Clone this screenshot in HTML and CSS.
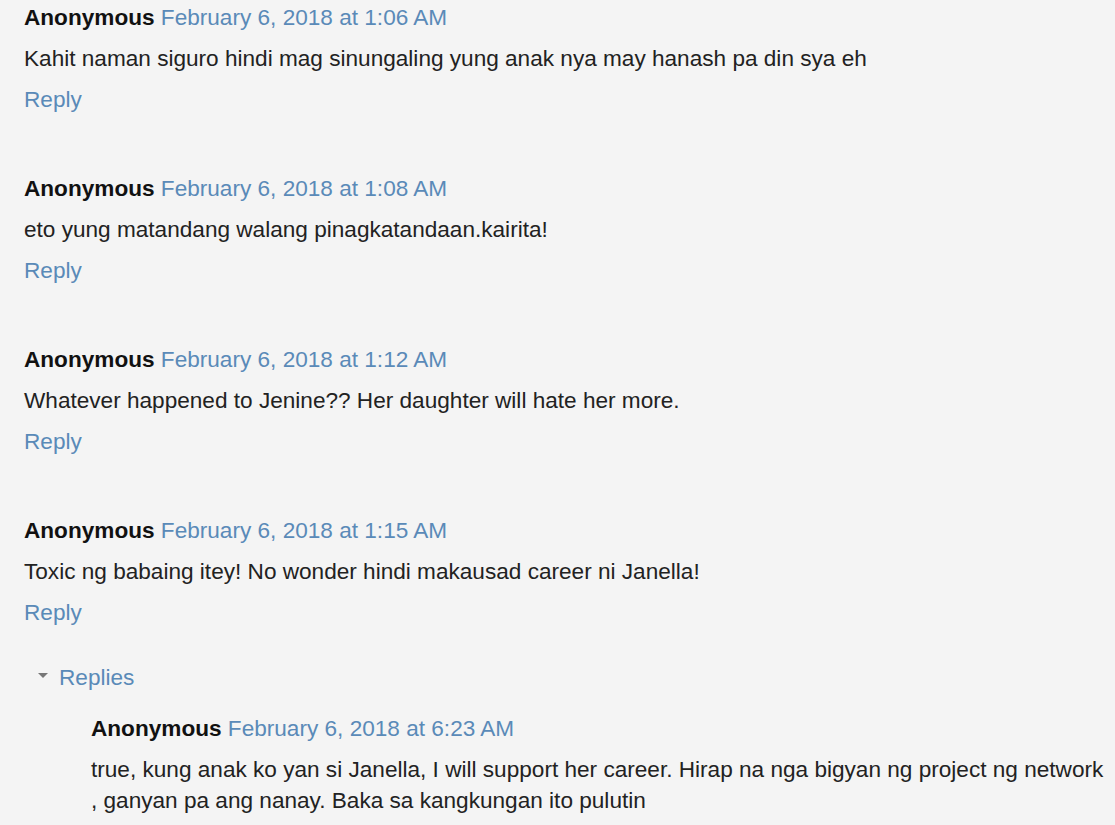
FILE: index.html
```html
<!DOCTYPE html>
<html lang="en">
<head>
    <meta charset="UTF-8">
    <title>Comments</title>
    <link rel="stylesheet" href="styles.css">
</head>
<body>
    <div class="comments">
        <div class="comment">
            <div class="comment-header">
                <span class="user">Anonymous</span>
                <a class="datetime" href="#">February 6, 2018 at 1:06 AM</a>
            </div>
            <p class="comment-content">Kahit naman siguro hindi mag sinungaling yung anak nya may hanash pa din sya eh</p>
            <div class="comment-actions"><a href="#">Reply</a></div>
        </div>

        <div class="comment">
            <div class="comment-header">
                <span class="user">Anonymous</span>
                <a class="datetime" href="#">February 6, 2018 at 1:08 AM</a>
            </div>
            <p class="comment-content">eto yung matandang walang pinagkatandaan.kairita!</p>
            <div class="comment-actions"><a href="#">Reply</a></div>
        </div>

        <div class="comment">
            <div class="comment-header">
                <span class="user">Anonymous</span>
                <a class="datetime" href="#">February 6, 2018 at 1:12 AM</a>
            </div>
            <p class="comment-content">Whatever happened to Jenine?? Her daughter will hate her more.</p>
            <div class="comment-actions"><a href="#">Reply</a></div>
        </div>

        <div class="comment">
            <div class="comment-header">
                <span class="user">Anonymous</span>
                <a class="datetime" href="#">February 6, 2018 at 1:15 AM</a>
            </div>
            <p class="comment-content">Toxic ng babaing itey! No wonder hindi makausad career ni Janella!</p>
            <div class="comment-actions"><a href="#">Reply</a></div>

            <div class="thread">
                <div class="thread-toggle">
                    <span class="arrow"></span>
                    <a href="#">Replies</a>
                </div>
                <div class="thread-chrome">
                    <div class="comment reply">
                        <div class="comment-header">
                            <span class="user">Anonymous</span>
                            <a class="datetime" href="#">February 6, 2018 at 6:23 AM</a>
                        </div>
                        <p class="comment-content">true, kung anak ko yan si Janella, I will support her career. Hirap na nga bigyan ng project ng network , ganyan pa ang nanay. Baka sa kangkungan ito pulutin</p>
                    </div>
                </div>
            </div>
        </div>
    </div>
</body>
</html>
```

FILE: styles.css
```css
body {
    margin: 0;
    background: #f4f4f4;
    font-family: Arial, "Liberation Sans", sans-serif;
    font-size: 22.6px;
    line-height: 31px;
    color: #222;
}

a {
    color: #5a8ab8;
    text-decoration: none;
}

.comments {
    padding: 2px 6px 0 24px;
}

.comment {
    margin-bottom: 58px;
}

.comment:last-child {
    margin-bottom: 0;
}

.comment-header .user {
    font-weight: bold;
    color: #111;
}

.comment-content {
    margin: 10px 0 0;
}

.comment-actions {
    margin-top: 10px;
}

.thread {
    margin-top: 34px;
}

.thread-toggle {
    display: flex;
    align-items: center;
    padding-left: 14px;
}

.thread-toggle .arrow {
    width: 0;
    height: 0;
    border-left: 5px solid transparent;
    border-right: 5px solid transparent;
    border-top: 5px solid #777;
    margin-right: 11px;
    margin-top: -4px;
}

.thread-chrome {
    margin-top: 20px;
    padding-left: 67px;
}
```
